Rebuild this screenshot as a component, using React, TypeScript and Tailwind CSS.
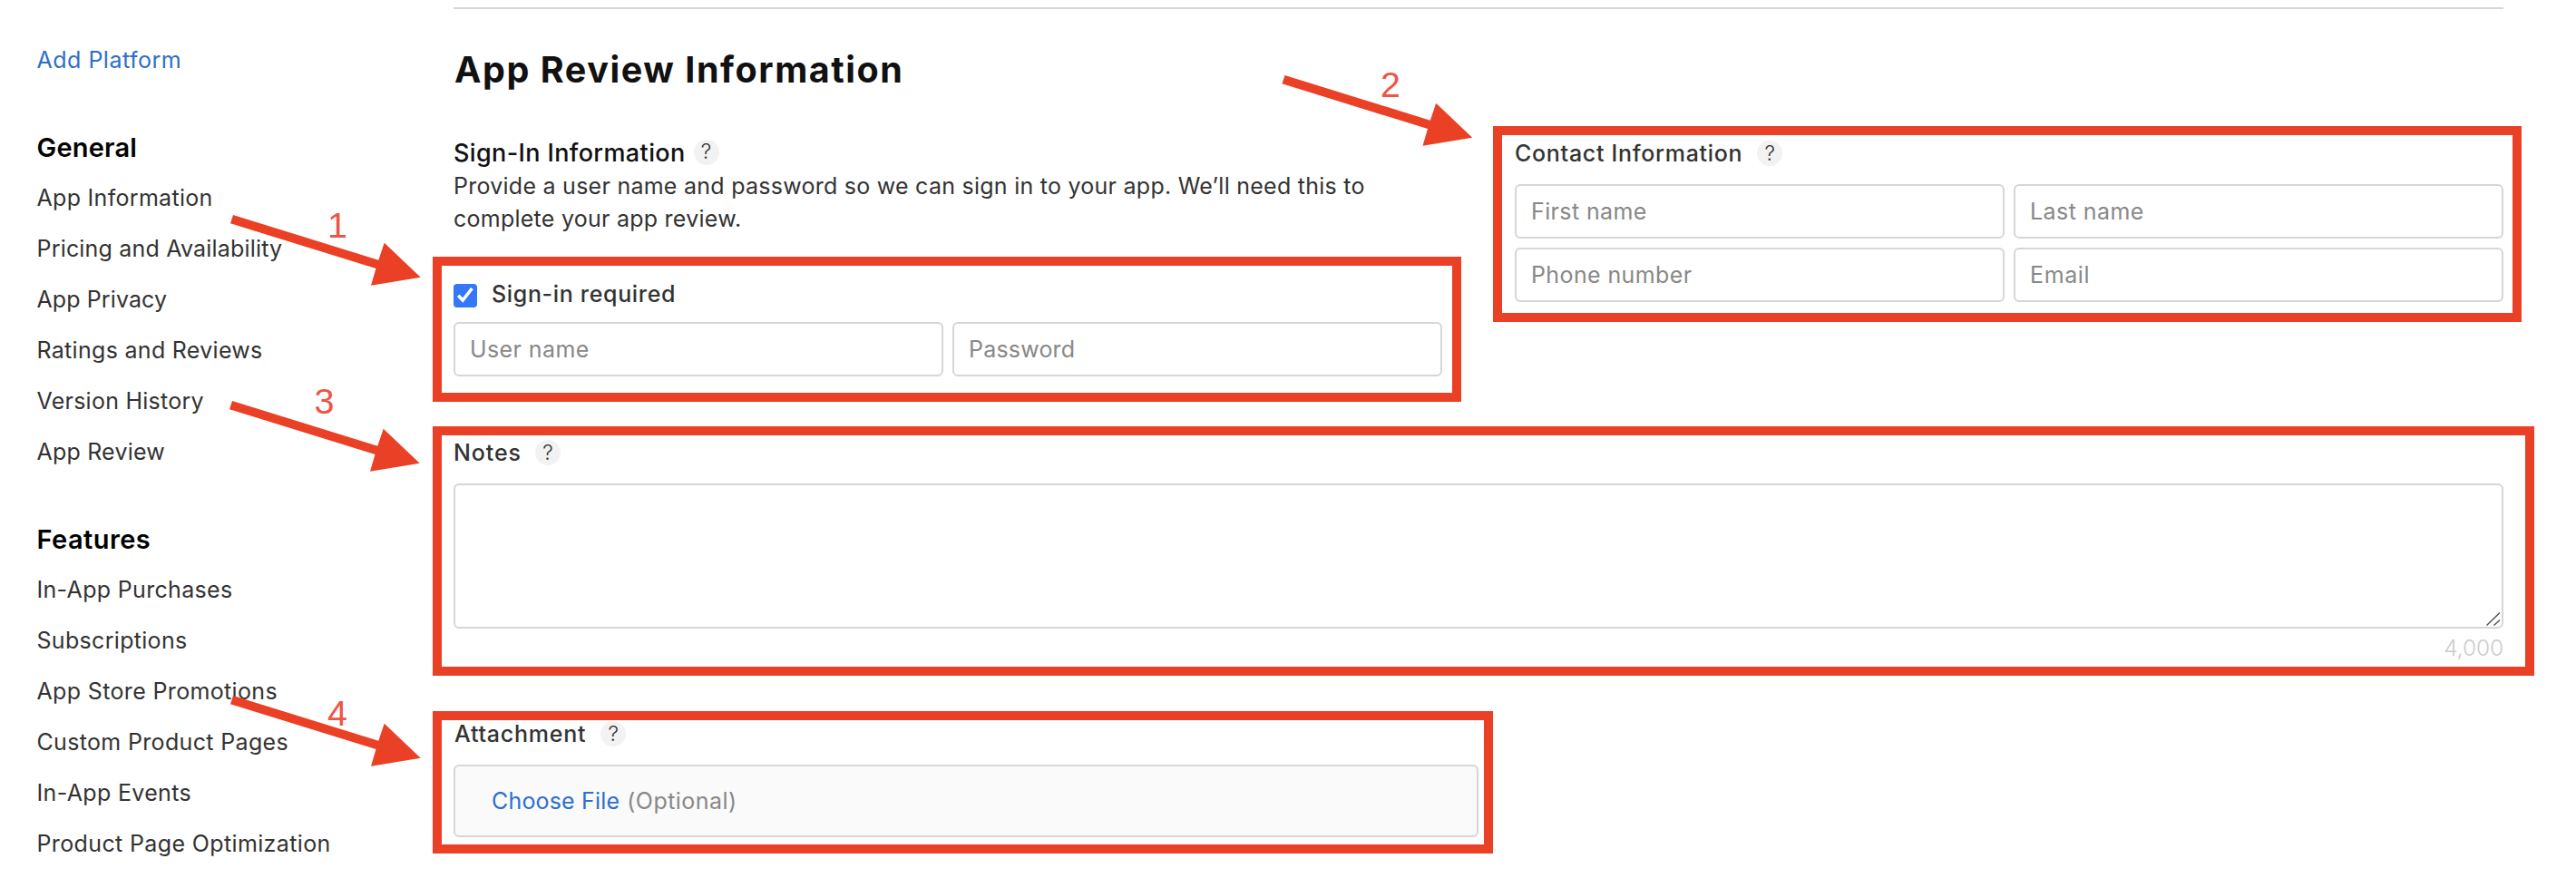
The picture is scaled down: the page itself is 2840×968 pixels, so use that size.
import type { ReactNode } from "react";

type NavItem = { label: string; tracking: string };

const general: NavItem[] = [
  { label: "App Information", tracking: "tracking-[0.3px]" },
  { label: "Pricing and Availability", tracking: "tracking-[0.19px]" },
  { label: "App Privacy", tracking: "tracking-[0.1px]" },
  { label: "Ratings and Reviews", tracking: "tracking-[0.3px]" },
  { label: "Version History", tracking: "tracking-[0.24px]" },
  { label: "App Review", tracking: "tracking-[0.2px]" },
];

const features: NavItem[] = [
  { label: "In-App Purchases", tracking: "tracking-[0.32px]" },
  { label: "Subscriptions", tracking: "tracking-[0.31px]" },
  { label: "App Store Promotions", tracking: "tracking-[0.35px]" },
  { label: "Custom Product Pages", tracking: "tracking-[0.34px]" },
  { label: "In-App Events", tracking: "tracking-[0.34px]" },
  { label: "Product Page Optimization", tracking: "tracking-[0.37px]" },
];

function NavGroup({ title, tracking, items }: { title: string; tracking: string; items: NavItem[] }) {
  return (
    <section className="mt-10">
      <h3 className={`pt-px text-[29px] leading-[55px] font-semibold text-black ${tracking}`}>{title}</h3>
      <ul>
        {items.map((item) => (
          <li key={item.label} className={`leading-[56px] ${item.tracking}`}>
            <a>{item.label}</a>
          </li>
        ))}
      </ul>
    </section>
  );
}

function Help() {
  return (
    <span className="flex size-7 items-center justify-center rounded-full bg-[#f2f2f2] text-[23px] leading-none font-light tracking-normal text-[#333]">
      ?
    </span>
  );
}

function Label({ children, className, gap }: { children: ReactNode; className: string; gap: string }) {
  return (
    <div className={`flex h-10 items-center ${gap}`}>
      <h4 className={`leading-10 font-medium ${className}`}>{children}</h4>
      <Help />
    </div>
  );
}

function Field({ placeholder, tracking, type = "text" }: { placeholder: string; tracking: string; type?: string }) {
  return (
    <input
      type={type}
      placeholder={placeholder}
      className={`h-[60px] w-[540px] rounded-md border-2 border-[#d6d6d6] bg-white pl-4 placeholder:text-[#888] ${tracking}`}
    />
  );
}

function Arrow({ x, y, digit, digitX, digitY }: { x: number; y: number; digit: string; digitX: number; digitY: number }) {
  return (
    <g>
      <polygon
        transform={`translate(${x} ${y})`}
        fill="#ea4025"
        points="3,0 163.3,49.7 169.7,30.7 209.7,68.7 155,77.7 160.5,59 0,9.3"
      />
      <text x={digitX} y={digitY} fontSize="39.5" fontFamily="Liberation Sans, sans-serif" fill="#ee5545">
        {digit}
      </text>
    </g>
  );
}

export default function App() {
  return (
    <div className="relative flex h-[968px] w-[2840px] overflow-hidden bg-white font-['Inter',sans-serif] text-[25px] text-[#333]">
      <aside className="w-[500px] shrink-0 pt-[38px] pl-[40.5px]">
        <a className="block leading-[56px] tracking-[0.5px] text-[#2d6fca]">Add Platform</a>
        <NavGroup title="General" tracking="tracking-[0.2px]" items={general} />
        <NavGroup title="Features" tracking="tracking-[0.45px]" items={features} />
      </aside>

      <main className="w-[2260px] shrink-0 pt-2">
        <div className="h-0.5 bg-[#d6d6d6]" />
        <h2 className="mt-[42px] pl-px text-[39.5px] leading-[50px] font-bold tracking-[1.55px] text-[#111]">
          App Review Information
        </h2>

        <div className="mt-[46px] flex h-[267px] justify-between">
          <section className="w-[1090px]">
            <div className="flex h-[39px] items-center gap-[9px]">
              <h4 className="pt-0.5 text-[27px] leading-[37px] font-medium tracking-[0.37px] text-[#111]">
                Sign-In Information
              </h4>
              <Help />
            </div>
            <p className="leading-9">
              <span className="tracking-[0.255px]">
                Provide a user name and password so we can sign in to your app. We’ll need this to
              </span>
              <br />
              <span className="tracking-[0.25px]">complete your app review.</span>
            </p>
            <label className="mt-[47px] flex h-9 items-start">
              <span className="mt-[7px] flex size-[26px] items-center justify-center rounded-[4px] bg-[#3478f6]">
                <svg viewBox="0 0 26 26" className="size-[26px]" fill="none" stroke="white" strokeWidth="3.6">
                  <path d="M5.2 12.8 L10.2 18 L20.4 5" />
                </svg>
              </span>
              <span className="ml-4 leading-9 font-medium tracking-[0.66px]">Sign-in required</span>
            </label>
            <div className="mt-[13px] flex gap-2.5">
              <Field placeholder="User name" tracking="tracking-[0.4px]" />
              <Field placeholder="Password" tracking="tracking-[0.2px]" />
            </div>
          </section>

          <section className="mt-px w-[1090px]">
            <Label className="tracking-[0.7px]" gap="gap-4">Contact Information</Label>
            <div className="mt-3.5 grid grid-cols-2 gap-2.5">
              <Field placeholder="First name" tracking="tracking-[0.38px]" />
              <Field placeholder="Last name" tracking="tracking-[0.43px]" />
              <Field placeholder="Phone number" tracking="tracking-[0.38px]" />
              <Field placeholder="Email" tracking="tracking-[0.6px]" />
            </div>
          </section>
        </div>

        <section className="mt-16">
          <Label className="tracking-[0.9px]" gap="gap-[15px]">Notes</Label>
          <div className="relative mt-3.5 h-40">
            <textarea className="block h-40 w-full resize-none rounded-md border-2 border-[#d6d6d6]" />
            <svg className="absolute right-[3px] bottom-0.5 size-4" viewBox="0 0 16 16" stroke="#555" strokeWidth="1.5">
              <path d="M0.5 14.5 L15 0.5 M8.5 14.5 L15 8.5" />
            </svg>
          </div>
          <p className="mt-[3px] text-right text-[24.5px] leading-9 font-light tracking-[-0.1px] text-[#ccc]">4,000</p>
        </section>

        <section className="mt-[57px]">
          <Label className="pl-px tracking-[0.75px]" gap="gap-4">Attachment</Label>
          <div className="mt-3.5 flex h-20 w-[1130px] items-center gap-2 rounded-md border-2 border-[#d6d6d6] bg-[#fafafa] pt-0.5 pl-10">
            <a className="tracking-[0.18px] text-[#2d6fca]">Choose File</a>
            <span className="tracking-[0.45px] text-[#888]">(Optional)</span>
          </div>
        </section>
      </main>

      <div className="absolute top-[283px] left-[477px] h-40 w-[1134px] border-10 border-[#ea4025]" />
      <div className="absolute top-[139px] left-[1646px] h-[216px] w-[1134px] border-10 border-[#ea4025]" />
      <div className="absolute top-[470px] left-[477px] h-[275px] w-[2317px] border-10 border-[#ea4025]" />
      <div className="absolute top-[784px] left-[477px] h-[157px] w-[1169px] border-10 border-[#ea4025]" />

      <svg className="pointer-events-none absolute inset-0" width="2840" height="968" viewBox="0 0 2840 968">
        <Arrow x={254} y={237} digit="1" digitX={361} digitY={262} />
        <Arrow x={1413.5} y={83} digit="2" digitX={1522} digitY={107} />
        <Arrow x={253} y={442} digit="3" digitX={346.5} digitY={456} />
        <Arrow x={254} y={767} digit="4" digitX={361} digitY={800} />
      </svg>
    </div>
  );
}
